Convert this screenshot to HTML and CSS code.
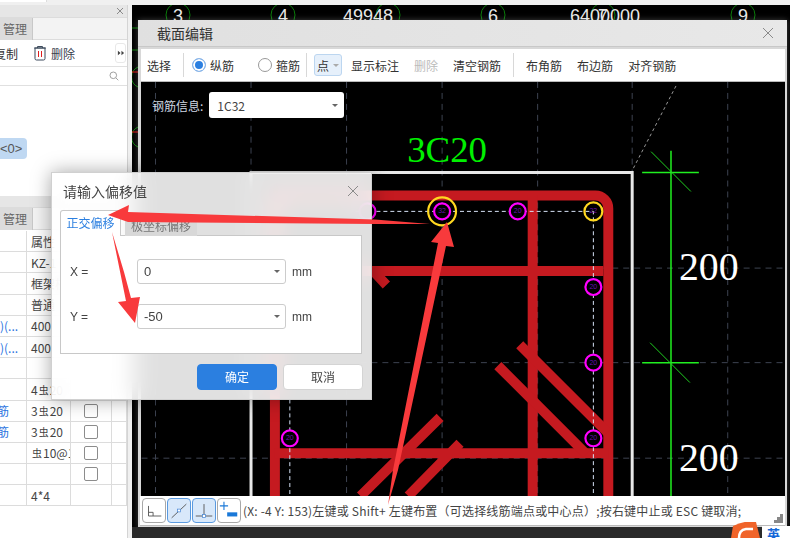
FILE: index.html
```html
<!DOCTYPE html>
<html lang="zh">
<head>
<meta charset="utf-8">
<title>截面编辑</title>
<link rel="stylesheet" href="styles.css">
</head>
<body>
<div class="app">
  <div class="topstrip"><i class="topedge"></i></div>
  <div class="main">
    <aside class="side">
      <div class="pane-head"><svg class="x" viewBox="0 0 8 8"><path d="M1 1l6 6M7 1L1 7"/></svg></div>
      <div class="tabs"><span class="tab">管理</span></div>
      <div class="tools">
        <span class="t-copy">复制</span>
        <svg class="trash" viewBox="0 0 14 16"><path class="trash-b" d="M2 3h10v10.500a1.500 1.500 0 0 1-1.500 1.500h-7A1.500 1.500 0 0 1 2 13.500zM1 3h12M4.500 3V1.500h5V3"/><path class="trash-r" d="M5.500 6v6M8.500 6v6"/></svg>
        <span class="t-del">删除</span>
        <span class="more"><svg viewBox="0 0 9 6"><path d="M1 .5L4 3L1 5.500zM5 .5L8 3L5 5.500z"/></svg></span>
      </div>
      <div class="search"><svg class="mag" viewBox="0 0 10 10"><circle cx="4.300" cy="4.300" r="3.300"/><path d="M6.800 6.800l2.500 2.500"/></svg></div>
      <div class="tree"><span class="badge">&lt;0&gt;</span></div>
      <div class="pane-head second"></div>
      <div class="tabs"><span class="tab">管理</span></div>
      <div class="grid">
        <div></div><div>属性</div><div></div><div></div>
        <div></div><div>KZ-1</div><div></div><div></div>
        <div></div><div>框架柱</div><div></div><div></div>
        <div></div><div>普通</div><div></div><div></div>
        <div class="blue">)(...</div><div>400</div><div></div><div></div>
        <div class="blue">)(...</div><div>400</div><div></div><div></div>
        <div></div><div></div><div></div><div></div>
        <div></div><div>4<span class="sym">虫</span>20</div><div></div><div></div>
        <div class="blue r">筋</div><div>3<span class="sym">虫</span>20</div><div><i class="cb"></i></div><div></div>
        <div class="blue r">筋</div><div>3<span class="sym">虫</span>20</div><div><i class="cb"></i></div><div></div>
        <div></div><div class="ind"><span class="sym">虫</span>10@100</div><div><i class="cb"></i></div><div></div>
        <div></div><div></div><div><i class="cb"></i></div><div></div>
        <div></div><div>4*4</div><div></div><div></div>
      </div>
    </aside>
    <div class="work">
      <svg class="back" viewBox="0 0 658 533">
        <g class="axis">
          <circle cx="46" cy="10" r="12"/><circle cx="151" cy="10" r="12"/><circle cx="256" cy="10" r="12"/><circle cx="361" cy="10" r="12"/><circle cx="471" cy="10" r="12"/><circle cx="611" cy="10" r="12"/>
          <path d="M0 23h6M0 45h6"/>
          <path d="M6 62a11 11 0 0 0 0 20M6 122a11 11 0 0 0 0 20"/>
        </g>
        <path class="tick" d="M0 67h6M0 127h6"/>
        <g class="axis-t">
          <text x="46" y="17">3</text><text x="151" y="17">4</text><text x="211" y="17" class="wide">49948</text><text x="361" y="17">6</text><text x="438" y="17" class="wide">6400000</text><text x="471" y="17">7</text><text x="611" y="17">9</text>
        </g>
      </svg>

      <section class="editor">
        <header class="ed-title"><span>截面编辑</span><svg class="x big" viewBox="0 0 12 12"><path d="M1 1l10 10M11 1L1 11"/></svg></header>
        <div class="ed-tools">
          <span class="tool">选择</span><i class="sep"></i>
          <label class="radio"><i class="dot on"></i>纵筋</label>
          <label class="radio r2"><i class="dot"></i>箍筋</label><i class="sep s2"></i>
          <span class="pt">点<b class="caret"></b></span>
          <span class="tool t3">显示标注</span>
          <span class="tool off">删除</span>
          <span class="tool">清空钢筋</span><i class="sep"></i>
          <span class="tool">布角筋</span>
          <span class="tool">布边筋</span>
          <span class="tool">对齐钢筋</span>
        </div>
        <div class="canvas">
          <svg class="draw" viewBox="0 0 646 416">
            <g transform="translate(-140,-81)">
              <path class="grid-l" d="M154 81V497M250 81V497M346 81V497M442 81V497M538 81V497M633 81V497M729 81V497M140 268H785M140 363H785M140 459H785"/>
              <path class="dots" d="M677 85L633 170"/>
              <path class="wall" d="M250 497V172H633V497"/>
              <g class="bar">
                <path d="M274 497V195H596a13 13 0 0 1 13 13V497"/>
                <path d="M533 195V497"/>
                <path d="M274 271H604M274 454H609"/>
                <path d="M372 270L386 285"/>
                <path d="M440 418L360 497M460 444L408 497"/>
                <path d="M520 345L608 433M498 366L587 455"/>
              </g>
              <path class="guide" d="M250 211H594V497M289 400V497"/>
              <g class="ring">
                <circle cx="367" cy="211" r="8"/><circle cx="442" cy="211" r="8"/><circle cx="518" cy="211" r="8"/><circle cx="594" cy="287" r="8"/><circle cx="594" cy="363" r="8"/><circle cx="594" cy="439" r="8"/><circle cx="289" cy="439" r="8"/>
              </g>
              <g class="ring-y"><circle cx="442" cy="211" r="14"/><circle cx="594" cy="211" r="9"/></g>
              <g class="mini">
                <text x="442" y="213">32</text><text x="518" y="213">20</text><text x="594" y="213">22</text><text x="594" y="289">20</text><text x="594" y="365">20</text><text x="594" y="441">20</text><text x="289" y="441">20</text>
              </g>
              <text class="label-g" x="447" y="161">3C20</text>
              <path class="dim" d="M672 150V497M643 172H700M643 363H700"/>
              <path class="dim-t" d="M652 151L692 191M651 343L691 383"/>
              <text class="label-w" x="710" y="280">200</text>
              <text class="label-w" x="710" y="472">200</text>
            </g>
          </svg>
          <div class="info">
            <span class="info-l">钢筋信息:</span>
            <span class="combo">1C32<b class="caret"></b></span>
          </div>
        </div>
        <footer class="status">
          <span class="ic"><svg viewBox="0 0 24 24"><path class="s" d="M6 7V18H20M6 14H11V18"/></svg></span>
          <span class="ic sel"><svg viewBox="0 0 24 24"><path class="s" d="M4 20L20 5"/><rect class="n" x="10.500" y="10.500" width="3" height="3"/></svg></span>
          <span class="ic sel"><svg viewBox="0 0 24 24"><path class="s" d="M12 5V18M3 18H21"/><rect class="n" x="10.500" y="16.500" width="3" height="3"/></svg></span>
          <span class="ic"><svg viewBox="0 0 24 24"><path class="b" d="M2 7H11M6.500 2.500V11.500"/><rect class="bf" x="10" y="14" width="11" height="4.500"/></svg></span>
          <span class="msg">(X: -4 Y: 153)左键或 Shift+ 左键布置（可选择线筋端点或中心点）;按右键中止或 ESC 键取消;</span>
          <svg class="grip" viewBox="0 0 9 9"><path d="M6 0h3v3H6zM3 3h3v3H3zM6 3h3v3H6zM0 6h3v3H0zM3 6h3v3H3zM6 6h3v3H6z"/></svg>
        </footer>
      </section>
      <div class="tray">
        <svg class="sogou" viewBox="0 0 30 16"><path d="M1 16L3 4Q15 -2 26 0L30 16z"/><path class="sw" d="M9 16Q9 8 16 7L23 7"/></svg>
        <span class="ying">英</span>
      </div>
    </div>
  </div>

  <section class="dialog">
    <header class="dlg-title"><span>请输入偏移值</span><svg class="x big" viewBox="0 0 12 12"><path d="M1 1l10 10M11 1L1 11"/></svg></header>
    <div class="dlg-tabs"><span class="dt on">正交偏移</span><span class="dt">极坐标偏移</span></div>
    <div class="dlg-box">
      <div class="row"><span class="lab">X =</span><span class="sel-in">0<b class="caret"></b></span><span class="unit">mm</span></div>
      <div class="row"><span class="lab">Y =</span><span class="sel-in">-50<b class="caret"></b></span><span class="unit">mm</span></div>
    </div>
    <div class="dlg-btns"><span class="btn pri">确定</span><span class="btn">取消</span></div>
  </section>

  <svg class="arrows" viewBox="0 0 790 538">
    <path d="M108 215L129 205L128 212L375 219.500L430 224L375 224L128 222Z"/>
    <path d="M112 232L124 272L131 298L140 297L135 323L118 302L126 301Z"/>
    <path d="M447 222L454 247L446 246L398 470L388 505L393 470L438 243L431 242Z"/>
  </svg>
</div>
</body>
</html>
```

FILE: styles.css
```css
* { box-sizing: border-box; }
html, body { margin: 0; padding: 0; }
body {
  width: 790px; height: 538px; overflow: hidden; background: #f0f0f0;
  font: 12px "Noto Sans CJK SC", "Liberation Sans", sans-serif; color: #333;
}
.app { position: relative; width: 790px; height: 538px; display: flex; flex-direction: column; }
.topstrip { height: 5px; flex: none; }
.topedge { display: block; width: 47px; height: 2px; background: #fff; border-right: 1px solid #ddd; }
.main { flex: 1; display: flex; gap: 4px; min-height: 0; }

/* left side panel */
.side { width: 128px; flex: none; background: #fff; border-right: 1px solid #d4d4d4; display: flex; flex-direction: column; overflow: hidden; }
.pane-head { height: 12px; flex: none; background: #e6e6e6; display: flex; justify-content: flex-end; align-items: center; padding-right: 3px; }
.pane-head.second { margin-top: 0; height: 11px; }
.x { width: 8px; height: 8px; fill: none; stroke: #8a8a8a; stroke-width: 1; }
.x.big { width: 12px; height: 12px; }
.tabs { height: 23px; flex: none; background: #f3f3f3; border-top: 1px solid #dcdcdc; border-bottom: 1px solid #dcdcdc; }
.tab { display: block; width: 33px; height: 22px; background: #dcdcdc; border-right: 1px solid #c8c8c8; font-size: 12px; line-height: 22px; color: #666; white-space: nowrap; direction: rtl; overflow: hidden; padding-right: 5px; }
.tools { height: 27px; flex: none; display: flex; align-items: center; border-bottom: 1px solid #e0e0e0; position: relative; }
.t-copy { margin-left: -6px; width: 24px; flex: none; white-space: nowrap; }
.trash { width: 14px; height: 16px; margin-left: 15px; fill: none; flex: none; }
.trash-b { stroke: #3c4a5c; stroke-width: 1; }
.trash-r { stroke: #e02020; stroke-width: 1; }
.t-del { margin-left: 4px; color: #39414d; }
.more { margin-left: auto; width: 11px; height: 20px; margin-right: 1px; border: 1px solid #e8e8e8; border-radius: 3px; display: flex; align-items: center; justify-content: center; }
.more svg { width: 8px; height: 6px; fill: #444; flex: none; }
.search { height: 19px; flex: none; border-bottom: 1px solid #e0e0e0; display: flex; justify-content: flex-end; align-items: center; padding-right: 8px; }
.mag { width: 10px; height: 10px; fill: none; stroke: #a0a0a0; stroke-width: 1; }
.tree { height: 110px; flex: none; padding-top: 52px; }
.badge { display: block; width: 27px; height: 21px; background: #bfd8f2; border-radius: 0 4px 4px 0; font: 13px/21px "Liberation Sans", sans-serif; text-align: right; padding-right: 5px; color: #555; }
.grid { display: grid; grid-template-columns: 27px 44px 41px 15px; grid-auto-rows: 21.2px; padding-top: 1px; }
.grid > div { border-right: 1px solid #dcdcdc; border-bottom: 1px solid #dcdcdc; padding-left: 4px; overflow: hidden; white-space: nowrap; color: #444; display: flex; align-items: center; }
.grid > .blue { color: #2b73e0; padding-left: 0; }
.grid > .r { justify-content: flex-end; padding-right: 17px; }
.sym { font-size: 10px; margin: 0 1px; }
.cb { display: block; width: 14px; height: 14px; border: 1px solid #8c8c8c; border-radius: 2px; margin-left: 9px; flex: none; }

/* workspace */
.work { flex: 1; position: relative; background: #000; }
.back { position: absolute; left: 0; top: 0; width: 658px; height: 533px; }
.axis { fill: none; stroke: #0a7a0a; stroke-width: 1; }
.tick { stroke: #e01010; stroke-width: 1; }
.axis-t text { fill: #e8e8e8; font: 18px "Liberation Sans", sans-serif; text-anchor: middle; }
.axis-t text.wide { text-anchor: start; }
.tray { position: absolute; left: 0; right: 0; bottom: 0; height: 11px; background: #2a2a2a; }
.sogou { position: absolute; right: 30px; bottom: 0; width: 30px; height: 16px; fill: #f0642a; }
.sw { fill: none; stroke: #fff; stroke-width: 2.500; }
.ying { position: absolute; right: 0; bottom: 0; width: 28px; height: 12px; background: #fff; color: #1568d8; font-size: 13px; font-weight: 700; line-height: 16px; overflow: hidden; padding-left: 5px; }

/* section editor window */
.editor { position: absolute; left: 6px; top: 15px; width: 649px; height: 508px; background: #d8d8d8; padding: 0 2px 2px 3px; display: flex; flex-direction: column; box-shadow: 0 0 6px rgba(255,255,255,.25); }
.ed-title { height: 27px; flex: none; margin: 0 -2px 0 -3px; padding: 0 13px 0 19px; background: linear-gradient(90deg, #e0e0e0, #e8e8e8); border-bottom: 1px solid #c8c8c8; display: flex; align-items: center; justify-content: space-between; font-size: 14px; color: #333; }
.ed-tools { height: 33px; flex: none; margin-top: 2px; background: #fff; display: flex; align-items: center; padding-left: 6px; border-bottom: 1px solid #bbb; white-space: nowrap; }
.tool { margin-right: 15px; }
.tool.t3 { margin-left: 9px; }
.tool.off { color: #bbb; }
.sep { width: 1px; height: 24px; background: #d8d8d8; margin: 0 12px 0 -3px; }
.sep.s2 { margin: 0 7px 0 6px; }
.radio { display: flex; align-items: center; gap: 4px; margin-left: -4px; }
.radio.r2 { margin-left: 24px; }
.dot { display: block; width: 14px; height: 14px; border: 1px solid #999; border-radius: 50%; background: #fff; }
.dot.on { background: #2b7fe0; box-shadow: inset 0 0 0 2px #fff; border-color: #8fb8e8; }
.pt { width: 28px; height: 22px; background: #e6f0fb; border: 1px solid #bcd6f0; border-radius: 3px; display: flex; align-items: center; padding-left: 2px; gap: 4px; }
.caret { display: inline-block; width: 0; height: 0; border-left: 3px solid transparent; border-right: 3px solid transparent; border-top: 3px solid #666; }
.pt .caret { border-top-color: #aaa; }
.canvas { flex: 1; position: relative; background: #000; min-height: 0; }
.draw { display: block; width: 100%; height: 100%; }
.grid-l { fill: none; stroke: #3d4452; stroke-width: 1; stroke-dasharray: 6 5; }
.dots { fill: none; stroke: #999; stroke-dasharray: 3 3; }
.wall { fill: none; stroke: #e8e8e8; stroke-width: 3; }
.bar path { fill: none; stroke: #c51a20; stroke-width: 10; }
.guide { fill: none; stroke: #d8e4f8; stroke-width: 1; stroke-dasharray: 4 3; }
.ring { fill: #000; stroke: #ff00ff; stroke-width: 2.200; }
.ring-y { fill: none; stroke: #ffd820; stroke-width: 2.200; }
.mini text { fill: #6a10b0; font: 7px "Liberation Sans", sans-serif; text-anchor: middle; }
.label-g { fill: #00f000; font: 37px "Liberation Serif", serif; text-anchor: middle; }
.label-w { fill: #fff; font: 40px "Liberation Serif", serif; text-anchor: middle; }
.dim { fill: none; stroke: #20f020; stroke-width: 1.500; }
.dim-t { fill: none; stroke: #20d020; stroke-width: 1; }
.info { position: absolute; left: 11px; top: 10px; display: flex; align-items: center; gap: 6px; }
.info-l { color: #cfd6e2; font-size: 12px; }
.combo { width: 135px; height: 26px; background: #fff; border-radius: 3px; display: flex; align-items: center; justify-content: space-between; padding: 0 6px 0 8px; font-size: 12px; color: #444; }
.status { height: 30px; flex: none; background: #fff; display: flex; align-items: center; gap: 1px; padding-left: 2px; position: relative; white-space: nowrap; margin-left: -1px; border-bottom: 1px solid #bbb; }
.ic { width: 24px; height: 25px; border: 1px solid #a8a8a8; border-radius: 4px; background: #fff; display: block; }
.ic svg { display: block; width: 22px; height: 23px; }
.ic.sel { background: #d8e8fa; border-color: #5a9ae0; }
.s { fill: none; stroke: #555; stroke-width: 1; }
.n { fill: #fff; stroke: #4a8ad8; stroke-width: .8; }
.b { fill: none; stroke: #1a78d8; stroke-width: 1.200; }
.bf { fill: #1a78d8; }
.msg { margin-left: 1px; font-size: 12px; color: #444; letter-spacing: .2px; }
.grip { position: absolute; right: 2px; bottom: 2px; width: 9px; height: 9px; fill: #888; }

/* offset dialog */
.dialog { position: absolute; left: 51px; top: 172px; width: 321px; height: 228px; background: rgba(255,255,255,.88); backdrop-filter: blur(10px); box-shadow: 0 0 18px rgba(0,0,0,.35); border: 1px solid #d0d0d0; padding: 0 8px; display: flex; flex-direction: column; }
.dlg-title { height: 37px; flex: none; display: flex; align-items: center; justify-content: space-between; padding: 0 4px 2px 3px; font-size: 14px; color: #444; }
.dlg-tabs { height: 26px; flex: none; display: flex; align-items: flex-end; gap: 4px; margin-bottom: -1px; position: relative; z-index: 1; }
.dt { height: 18px; width: 72px; background: #d8d8d8; color: #777; font-size: 12px; line-height: 15px; text-align: center; white-space: nowrap; }
.dt.on { width: 61px; height: 26px; background: #fff; color: #2b7fe0; border: 1px solid #c8c8c8; border-bottom: none; border-radius: 3px 3px 0 0; line-height: 24px; }
.dlg-box { width: 302px; height: 119px; flex: none; background: #fff; border: 1px solid #c8c8c8; padding-top: 23px; display: flex; flex-direction: column; gap: 20px; }
.row { display: flex; align-items: center; height: 25px; font-family: "Liberation Sans", sans-serif; font-size: 12px; color: #444; }
.lab { width: 76px; padding-left: 9px; }
.sel-in { width: 149px; height: 25px; border: 1px solid #ccc; border-radius: 3px; background: #fff; display: flex; align-items: center; justify-content: space-between; padding: 0 5px 0 6px; font-size: 13px; }
.unit { margin-left: 6px; }
.dlg-btns { display: flex; justify-content: flex-end; gap: 6px; margin-top: 10px; }
.btn { width: 80px; height: 26px; border: 1px solid #d4d4d4; border-radius: 4px; background: #fff; text-align: center; line-height: 24px; color: #444; }
.btn.pri { background: #2b7fe0; border-color: #2b7fe0; color: #fff; }

.arrows { position: absolute; left: 0; top: 0; width: 790px; height: 538px; fill: #f83a3c; pointer-events: none; }
```
